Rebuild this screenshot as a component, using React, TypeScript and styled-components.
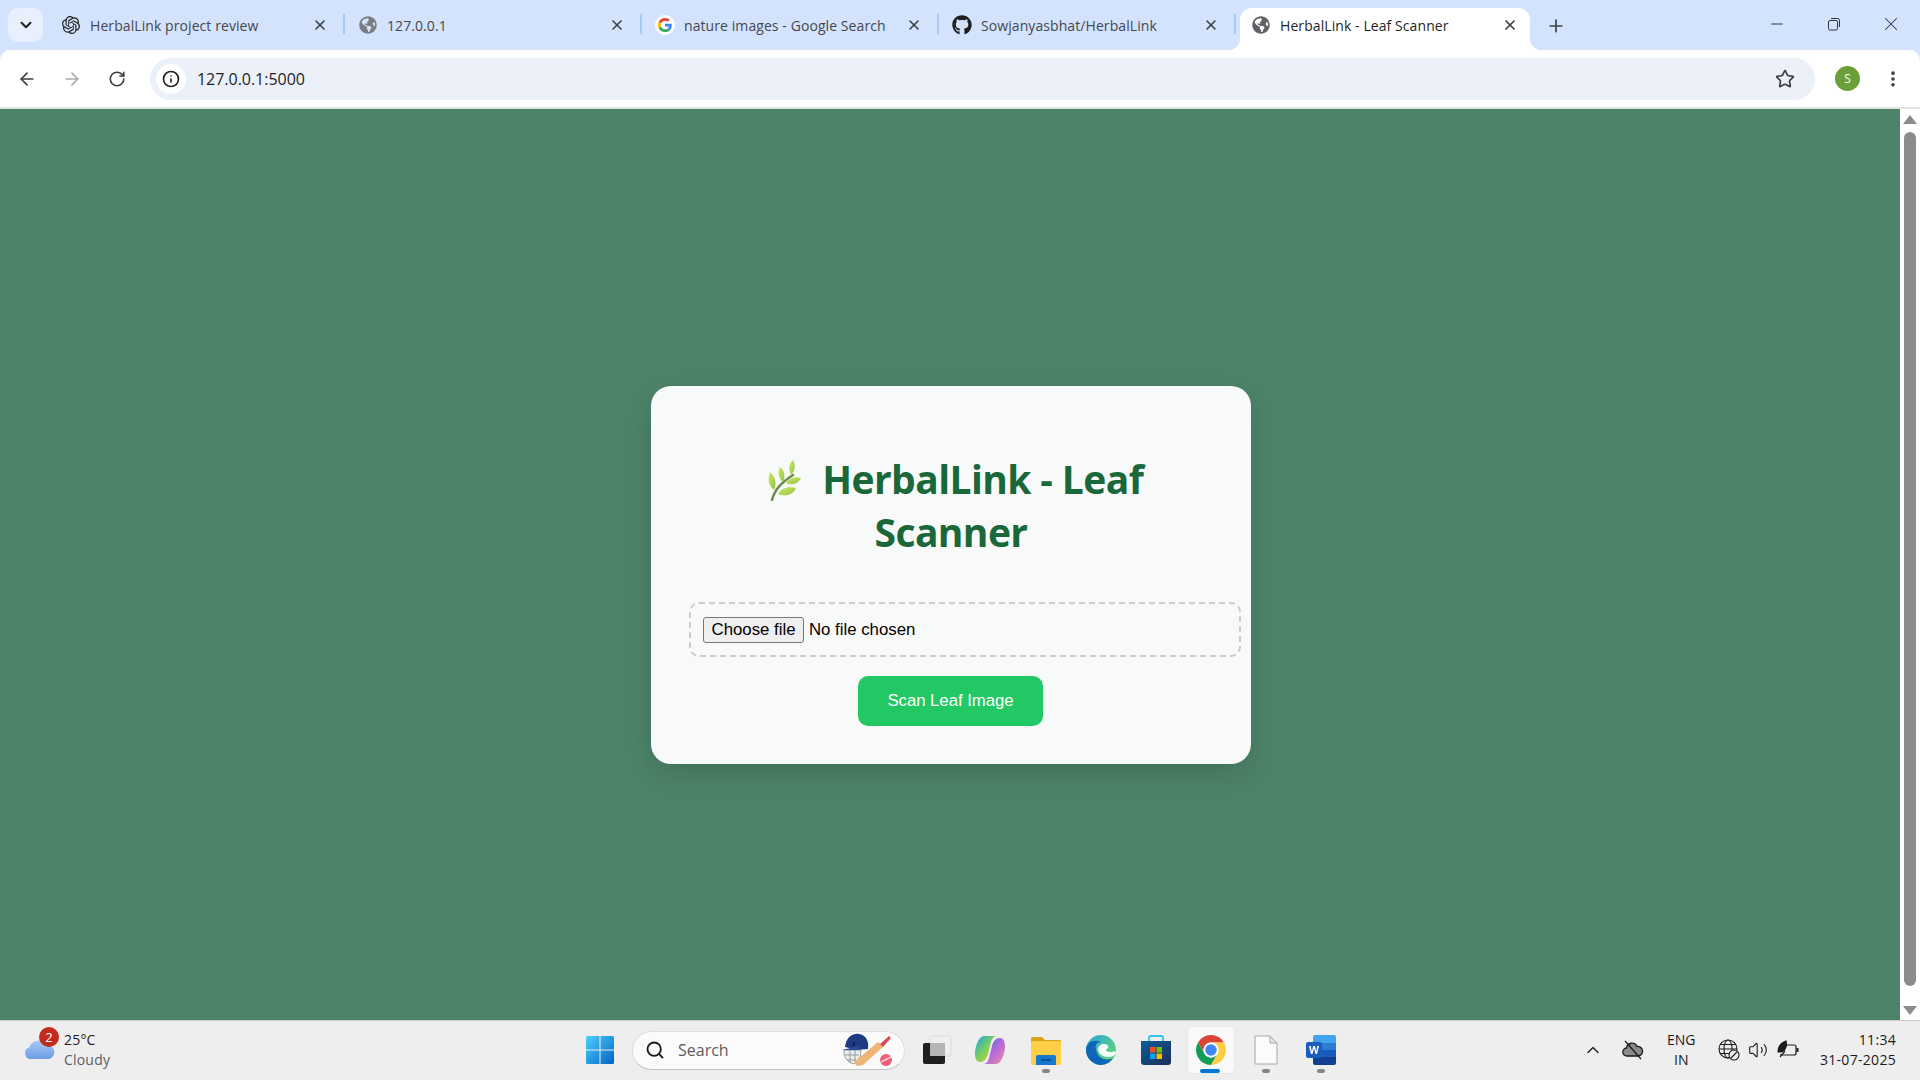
import React from "react";
import styled, { createGlobalStyle } from "styled-components";
import { FaGithub, FaGlobeAmericas } from "react-icons/fa";
import { SiOpenai } from "react-icons/si";
import {
  ArrowLeft,
  ArrowRight,
  ChevronDown,
  ChevronUp,
  EllipsisVertical,
  Info,
  Minus,
  Plus,
  RotateCw,
  Search,
  Star,
  Volume2,
  X,
} from "lucide-react";

const UI_FONT = `"Open Sans", "Noto Sans", sans-serif`;
const ARIAL = `"Liberation Sans", Arial, sans-serif`;

const GlobalStyle = createGlobalStyle`
  html, body {
    margin: 0;
    padding: 0;
    height: 100%;
    overflow: hidden;
  }
  #root {
    height: 100%;
  }
`;

const Screen = styled.div`
  display: flex;
  flex-direction: column;
  width: 1920px;
  height: 1080px;
  font-family: ${UI_FONT};
  background: #d3e3fd;
`;

/* ---- tab strip ---- */

const TabStrip = styled.div`
  display: flex;
  align-items: flex-end;
  height: 50px;
  padding-left: 8px;
  flex-shrink: 0;
`;

const TabSearch = styled.div`
  display: flex;
  align-items: center;
  justify-content: center;
  align-self: flex-start;
  width: 35px;
  height: 34px;
  margin: 8px 5px 0 0;
  border-radius: 10px;
  background: #e9f0fd;
  color: #1f1f1f;
`;

const Tab = styled.div<{ $active?: boolean }>`
  position: relative;
  display: flex;
  align-items: center;
  box-sizing: border-box;
  width: ${(p) => (p.$active ? "290px" : "295px")};
  height: 42px;
  padding: 0 ${(p) => (p.$active ? "12px" : "15px")} 8px
    ${(p) => (p.$active ? "11px" : "13px")};
  margin-left: ${(p) => (p.$active ? "4px" : "0")};
  border-radius: 12px 12px 0 0;
  background: ${(p) => (p.$active ? "#ffffff" : "transparent")};
  color: ${(p) => (p.$active ? "#1f1f1f" : "#45484d")};

  ${(p) =>
    p.$active &&
    `
    &::before, &::after {
      content: "";
      position: absolute;
      bottom: 0;
      width: 12px;
      height: 12px;
    }
    &::before {
      left: -12px;
      background: radial-gradient(circle at 0 0, transparent 12px, #fff 12.5px);
    }
    &::after {
      right: -12px;
      background: radial-gradient(circle at 100% 0, transparent 12px, #fff 12.5px);
    }
  `}
`;

const TabIcon = styled.span<{ $color?: string }>`
  display: flex;
  align-items: center;
  justify-content: center;
  width: 20px;
  height: 20px;
  flex-shrink: 0;
  color: ${(p) => p.$color ?? "#5f6368"};
`;

const TabTitle = styled.span`
  flex: 1;
  margin-left: 9px;
  font-size: 14px;
  letter-spacing: 0.08px;
  white-space: nowrap;
  overflow: hidden;
`;

const TabClose = styled.span`
  display: flex;
  align-items: center;
  justify-content: center;
  width: 16px;
  height: 16px;
  flex-shrink: 0;
  color: #3c4043;
`;

const TabDivider = styled.span`
  align-self: flex-start;
  width: 2px;
  height: 20px;
  margin-top: 14px;
  background: #a8c7fa;
  flex-shrink: 0;
`;

const NewTab = styled.span`
  display: flex;
  align-self: flex-start;
  margin: 16px 0 0 16px;
  color: #3c4043;
`;

const WindowControls = styled.div`
  display: flex;
  align-self: flex-start;
  align-items: center;
  height: 50px;
  margin-left: auto;
  padding-right: 1px;
  color: #2f3236;
`;

const WindowButton = styled.span`
  display: flex;
  align-items: center;
  justify-content: center;
  width: 57px;
  height: 50px;
  margin-top: -3px;
`;

/* ---- toolbar ---- */

const Toolbar = styled.div`
  display: flex;
  align-items: center;
  height: 57px;
  box-sizing: border-box;
  padding: 0 0 0 15px;
  background: #ffffff;
  border-radius: 10px 10px 0 0;
  flex-shrink: 0;
`;

const NavButton = styled.span<{ $disabled?: boolean }>`
  display: flex;
  align-items: center;
  justify-content: center;
  width: 24px;
  height: 24px;
  margin-right: 21px;
  color: ${(p) => (p.$disabled ? "#a9abad" : "#3c4043")};
`;

const AddressBar = styled.div`
  display: flex;
  align-items: center;
  width: 1665px;
  height: 42px;
  padding: 0 20px 0 6px;
  box-sizing: border-box;
  border-radius: 21px;
  background: #ebf0f9;
`;

const SiteInfo = styled.span`
  display: flex;
  align-items: center;
  justify-content: center;
  width: 30px;
  height: 30px;
  border-radius: 50%;
  background: #ffffff;
  color: #1f1f1f;
`;

const UrlText = styled.span`
  flex: 1;
  margin-left: 11px;
  font-size: 16px;
  letter-spacing: -0.03px;
  color: #1f1f1f;
`;

const Avatar = styled.span`
  display: flex;
  align-items: center;
  justify-content: center;
  width: 25px;
  height: 25px;
  margin-left: 20px;
  border-radius: 50%;
  background: #6a9f3a;
  color: #ffffff;
  font-size: 12px;
`;

const MenuButton = styled.span`
  display: flex;
  margin-left: 23px;
  color: #3c4043;
`;

const ToolbarEdge = styled.div`
  height: 2px;
  background: #e2e3e3;
  flex-shrink: 0;
`;

/* ---- page ---- */

const Viewport = styled.div`
  display: flex;
  flex: 1;
  min-height: 0;
`;

const Page = styled.main`
  flex: 1;
  display: flex;
  align-items: center;
  justify-content: center;
  padding-top: 21px;
  background: #4d8469;
`;

const Card = styled.section`
  width: 600px;
  height: 378px;
  box-sizing: border-box;
  margin-left: 2px;
  padding: 38px;
  border-radius: 20px;
  background: #f8faf9;
  box-shadow: 0 10px 30px rgba(0, 0, 0, 0.15);
  text-align: center;
`;

const Title = styled.h1`
  margin: 28px 0 44px;
  font-family: ${UI_FONT};
  font-size: 39px;
  font-weight: 700;
  line-height: 53px;
  letter-spacing: -0.6px;
  color: #1a673a;
`;

const LeafGlyph = styled.svg`
  width: 36px;
  height: 42px;
  margin: 0 19.5px 0 8px;
  vertical-align: -7px;
`;

const FileField = styled.div`
  display: flex;
  align-items: center;
  width: 100%;
  padding: 13px 12px 12px;
  border: 2px dashed #cccccc;
  border-radius: 10px;
  box-sizing: content-box;
  height: 26px;
  font-family: ${ARIAL};
  font-size: 16.8px;
  color: #000000;
`;

const ChooseFile = styled.button`
  box-sizing: border-box;
  width: 101px;
  height: 26px;
  padding: 0;
  margin-right: 5px;
  border: 1px solid #767676;
  border-radius: 3px;
  background: #efefef;
  font: inherit;
  color: #000000;
`;

const ScanButton = styled.button`
  display: block;
  width: 185px;
  height: 50px;
  margin: 19px 0 0 169px;
  border: 0;
  border-radius: 10px;
  background: #22c864;
  color: #ffffff;
  font-family: ${ARIAL};
  font-size: 16.7px;
`;

const Scrollbar = styled.div`
  display: flex;
  flex-direction: column;
  align-items: center;
  width: 20px;
  padding: 6px 0 5px;
  box-sizing: border-box;
  background: #ffffff;
`;

const ScrollArrow = styled.span<{ $down?: boolean }>`
  width: 0;
  height: 0;
  border-left: 7px solid transparent;
  border-right: 7px solid transparent;
  ${(p) =>
    p.$down ? "border-top: 9px solid #8b8b8b;" : "border-bottom: 9px solid #8b8b8b;"}
`;

const ScrollThumb = styled.span`
  flex: 1;
  width: 12px;
  margin: 8px 0 20px;
  border-radius: 6px;
  background: #8b8b8b;
`;

/* ---- taskbar ---- */

const Taskbar = styled.footer`
  display: flex;
  align-items: center;
  height: 60px;
  box-sizing: border-box;
  padding: 0 0 1px 24px;
  border-top: 1px solid #c9cbc9;
  background: #eeeeee;
  flex-shrink: 0;
  font-family: ${UI_FONT};
  color: #1b1b1b;
`;

const Weather = styled.div`
  display: flex;
  align-items: center;
  width: 561px;
  flex-shrink: 0;
`;

const WeatherIcon = styled.span`
  position: relative;
  display: flex;
  width: 32px;
  height: 34px;
  margin-bottom: 12px;
  align-items: flex-end;
`;

const WeatherBadge = styled.span`
  position: absolute;
  top: 0;
  right: -3px;
  display: flex;
  align-items: center;
  justify-content: center;
  width: 20px;
  height: 20px;
  border-radius: 50%;
  background: #c42b1c;
  color: #ffffff;
  font-size: 13px;
`;

const WeatherText = styled.span`
  display: flex;
  flex-direction: column;
  margin: -1px 0 0 8px;
  font-size: 14px;
  line-height: 20px;
  letter-spacing: 0.2px;
`;

const Muted = styled.span`
  color: #5d5d5d;
`;

const StartButton = styled.span`
  display: flex;
  width: 30px;
  height: 30px;
  flex-shrink: 0;
`;

const SearchPill = styled.div`
  display: flex;
  align-items: center;
  box-sizing: border-box;
  width: 273px;
  height: 39px;
  margin-left: 17px;
  padding: 0 10px 0 12px;
  border: 1px solid #dedede;
  border-bottom-color: #c4c4c4;
  border-radius: 20px;
  background: #fbfbfb;
  color: #1b1b1b;
  flex-shrink: 0;
`;

const SearchLabel = styled.span`
  flex: 1;
  margin-left: 13px;
  font-size: 16px;
  color: #5d5d5d;
`;

const TaskIcons = styled.div`
  display: flex;
  align-items: center;
  margin-left: 16px;
  flex-shrink: 0;
`;

const TaskSlot = styled.span<{ $active?: boolean; $dot?: boolean; $width?: number }>`
  position: relative;
  display: flex;
  align-items: center;
  justify-content: center;
  width: ${(p) => p.$width ?? 55}px;
  height: 48px;
  border-radius: 6px;

  ${(p) =>
    p.$active &&
    `
    &::before {
      content: "";
      position: absolute;
      top: 0;
      left: 4px;
      right: 3px;
      bottom: 0;
      border-radius: 6px;
      background: #f9f9f9;
      border: 1px solid #e8e8e8;
      box-sizing: border-box;
    }
    &::after {
      content: "";
      position: absolute;
      bottom: 1px;
      left: 17px;
      width: 20px;
      height: 4px;
      border-radius: 2px;
      background: #0078d4;
    }
  `}

  ${(p) =>
    p.$dot &&
    `
    &::after {
      content: "";
      position: absolute;
      bottom: 1px;
      left: 50%;
      margin-left: -4px;
      width: 8px;
      height: 4px;
      border-radius: 2px;
      background: #858585;
    }
  `}

  svg {
    position: relative;
  }
`;

const Tray = styled.div`
  display: flex;
  align-items: center;
  flex: 1;
  padding-right: 24px;
`;

const TrayIcon = styled.span<{ $left: number }>`
  display: flex;
  margin-left: ${(p) => p.$left}px;
`;

const Language = styled.span`
  display: flex;
  flex-direction: column;
  align-items: center;
  margin: 0 0 0 23px;
  font-size: 14px;
  line-height: 20px;
`;

const Clock = styled.span`
  display: flex;
  flex-direction: column;
  align-items: flex-end;
  margin: -1px 0 0 auto;
  font-size: 14px;
  line-height: 20px;
  letter-spacing: 0.3px;
`;

/* ---- drawn icons ---- */

const RestoreIcon = () => (
  <svg width="14" height="14" viewBox="0 0 14 14" fill="none" stroke="currentColor">
    <rect x="1.5" y="3.5" width="9" height="9.5" rx="1.5" />
    <path d="M4 1.5h6.5a2 2 0 0 1 2 2V10" />
  </svg>
);

const GoogleIcon = () => (
  <svg width="20" height="20" viewBox="0 0 48 48">
    <circle cx="24" cy="24" r="24" fill="#fff" />
    <g transform="translate(7 7) scale(0.71)">
      <path fill="#EA4335" d="M24 9.5c3.5 0 6.700 1.200 9.200 3.600l6.900-6.900C35.900 2.400 30.500 0 24 0 14.600 0 6.500 5.400 2.600 13.200l8 6.200C12.500 13.700 17.800 9.500 24 9.500z" />
      <path fill="#4285F4" d="M46.900 24.500c0-1.600-.1-3.100-.4-4.500H24v9h12.900c-.6 3-2.200 5.500-4.700 7.200l7.700 6c4.500-4.200 7-10.300 7-17.700z" />
      <path fill="#FBBC05" d="M10.500 28.600c-.5-1.500-.8-3-.8-4.600s.3-3.200.8-4.600l-8-6.200C.9 16.500 0 20.100 0 24s.9 7.500 2.600 10.800l7.900-6.200z" />
      <path fill="#34A853" d="M24 48c6.500 0 11.900-2.100 15.900-5.800l-7.700-6c-2.100 1.400-4.900 2.300-8.200 2.300-6.200 0-11.500-4.200-13.400-9.900l-8 6.200C6.500 42.600 14.600 48 24 48z" />
    </g>
  </svg>
);

const LeafEmoji = () => (
  <LeafGlyph viewBox="0 0 36 42">
    <defs>
      <linearGradient id="leafFill" x1="0" y1="0" x2="1" y2="1">
        <stop offset="0" stopColor="#cfe96a" />
        <stop offset="1" stopColor="#8fc23e" />
      </linearGradient>
    </defs>
    <path d="M5 41C8 30 14 24 26 16" fill="none" stroke="#6f8a4a" strokeWidth="2.400" strokeLinecap="round" />
    <path d="M7 31C2 27 0 20 3 13c5 4 7 11 4 18z" fill="url(#leafFill)" />
    <path d="M16 23c-4-3-6-9-3-15 4 3 6 9 3 15z" fill="url(#leafFill)" />
    <path d="M24 16c-3-5-2-11 2-15 3 5 2 11-2 15z" fill="url(#leafFill)" />
    <path d="M19 24c3-5 9-7 15-5-2 5-9 8-15 5z" fill="url(#leafFill)" />
    <path d="M11 35c3-6 10-8 18-6-3 7-11 9-18 6z" fill="url(#leafFill)" />
  </LeafGlyph>
);

const CloudIcon = () => (
  <svg width="32" height="24" viewBox="0 0 32 24">
    <defs>
      <linearGradient id="cloudFill" x1="0" y1="0" x2="0" y2="1">
        <stop offset="0" stopColor="#a9c8f5" />
        <stop offset="1" stopColor="#6d9be6" />
      </linearGradient>
    </defs>
    <path d="M7 22a6 6 0 0 1-1.500-11.800A9 9 0 0 1 22 8.500a6.800 6.800 0 0 1 3 13.500z" fill="url(#cloudFill)" />
  </svg>
);

const WindowsLogo = () => (
  <svg width="30" height="30" viewBox="0 0 30 30">
    <defs>
      <linearGradient id="winFill" x1="0" y1="0" x2="1" y2="1">
        <stop offset="0" stopColor="#4fd0fb" />
        <stop offset="1" stopColor="#0063c9" />
      </linearGradient>
    </defs>
    <path d="M1 2.500A1.500 1.500 0 0 1 2.500 1h12v13.500H1z M15.500 1h12A1.500 1.500 0 0 1 29 2.500v12H15.500z M1 15.500h13.500V29h-12A1.500 1.500 0 0 1 1 27.500z M15.500 15.500H29v12a1.500 1.500 0 0 1-1.500 1.500h-12z" fill="url(#winFill)" />
  </svg>
);

const CricketIcon = () => (
  <svg width="52" height="34" viewBox="0 0 52 34">
    <g fill="none" stroke="#8f9498" strokeWidth="0.900">
      <path d="M2 17c-1 7 4 13 10 14l6-5 1-9z" fill="#ececec" />
      <path d="M3 22h14M5 27h9M8 17v13M13 17v12" />
    </g>
    <path d="M3 14C4 5 10 0 17 1c7 1 10 7 9 15l-11 1z" fill="#1f3a80" />
    <path d="M0 17l17-4v4z" fill="#2a4a9c" />
    <path d="M11 9h2v4h-2z" fill="#0e1f4e" />
    <path d="M15 33l-3-4 24-20 6 4-21 19z" fill="#eeb577" />
    <path d="M38 11l9-8 2 2-8 9z" fill="#d9485f" />
    <circle cx="44" cy="27" r="6" fill="#ef5d78" />
    <path d="M39 29l10-5" stroke="#fbd3db" strokeWidth="1.500" />
  </svg>
);

const TaskView = () => (
  <svg width="30" height="30" viewBox="0 0 30 30">
    <rect x="8" y="1" width="21" height="20" rx="2" fill="#efefef" stroke="#dcdcdc" />
    <rect x="1" y="8" width="22" height="21" rx="2" fill="#1f1f1f" />
    <rect x="8" y="8" width="15" height="13" fill="#b5b5b5" />
  </svg>
);

const CopilotIcon = () => (
  <svg width="32" height="30" viewBox="0 0 32 30">
    <defs>
      <linearGradient id="copA" x1="0" y1="0" x2="1" y2="1">
        <stop offset="0" stopColor="#1aa3e8" />
        <stop offset="0.5" stopColor="#7fd05a" />
        <stop offset="1" stopColor="#f5c33b" />
      </linearGradient>
      <linearGradient id="copB" x1="0" y1="0" x2="1" y2="1">
        <stop offset="0" stopColor="#2f6fe6" />
        <stop offset="0.5" stopColor="#b469d9" />
        <stop offset="1" stopColor="#f08aa8" />
      </linearGradient>
    </defs>
    <path d="M9 1h13c-3 0-5 2-6 6l-3 12c-1 5-4 8-8 8-3 0-5-3-5-8 0-8 4-18 9-18z" fill="url(#copA)" />
    <path d="M21 29H8c3 0 5-2 6-6l3-12c1-5 4-8 8-8 3 0 5 3 5 8 0 8-4 18-9 18z" fill="url(#copB)" />
  </svg>
);

const FolderIcon = () => (
  <svg width="32" height="30" viewBox="0 0 32 30">
    <path d="M1 4a2 2 0 0 1 2-2h9l3 3h15a2 2 0 0 1 1 1v3H1z" fill="#dba213" />
    <rect x="1" y="6" width="30" height="24" rx="2" fill="#ffcf48" />
    <path d="M6 22a2 2 0 0 1 2-2h16a2 2 0 0 1 2 2v8H6z" fill="#1478cf" />
    <rect x="11" y="24" width="10" height="2" fill="#0d4f95" />
  </svg>
);

const EdgeIcon = () => (
  <svg width="30" height="30" viewBox="0 0 30 30">
    <defs>
      <linearGradient id="edgeTop" x1="0" y1="0" x2="1" y2="1">
        <stop offset="0" stopColor="#2aa4d8" />
        <stop offset="1" stopColor="#6ee06a" />
      </linearGradient>
    </defs>
    <circle cx="15" cy="15" r="15" fill="url(#edgeTop)" />
    <path d="M0 15C0 7 9 4 15 7c-5 0-6 4-5 8 1 6 7 11 14 9 1 0 2-.500 3-1-3 4-7 7-12 7C7 30 0 23 0 15z" fill="#0f66b8" />
    <path d="M30 17c0 3-4 5-8 5-6 0-10-4-10-8 0-3 3-5 6-5 3 0 5 2 4 4-.500 1-2 1-2 2 0 1 2 2 4 2 3 0 6-1 6 0z" fill="#fff" opacity="0.950" />
  </svg>
);

const StoreIcon = () => (
  <svg width="30" height="30" viewBox="0 0 30 30">
    <defs>
      <linearGradient id="storeFill" x1="0" y1="0" x2="1" y2="1">
        <stop offset="0" stopColor="#0d5c9c" />
        <stop offset="1" stopColor="#1c2f57" />
      </linearGradient>
    </defs>
    <path d="M8 6V2.500A1.500 1.500 0 0 1 9.500 1h11A1.500 1.500 0 0 1 22 2.500V6" fill="none" stroke="#31c4f0" strokeWidth="1.800" />
    <path d="M0 6h30v21a3 3 0 0 1-3 3H3a3 3 0 0 1-3-3z" fill="url(#storeFill)" />
    <rect x="9" y="12" width="5.500" height="5.500" fill="#f25022" />
    <rect x="15.500" y="12" width="5.500" height="5.500" fill="#7fba00" />
    <rect x="9" y="18.500" width="5.500" height="5.500" fill="#00a4ef" />
    <rect x="15.500" y="18.500" width="5.500" height="5.500" fill="#ffb900" />
  </svg>
);

const ChromeIcon = () => (
  <svg width="30" height="30" viewBox="0 0 24 24">
    <path d="M12 0A12 12 0 0 1 22.390 6H12A6 6 0 0 0 6.800 15L1.610 6A12 12 0 0 1 12 0z" fill="#db4437" />
    <path d="M1.610 6A12 12 0 0 0 12 24L17.200 15A6 6 0 0 1 6.800 15z" fill="#0f9d58" />
    <path d="M22.390 6A12 12 0 0 1 12 24L17.200 15A6 6 0 0 0 12 6z" fill="#ffcd40" />
    <circle cx="12" cy="12" r="6" fill="#fff" />
    <circle cx="12" cy="12" r="4.600" fill="#4285f4" />
  </svg>
);

const FileIcon = () => (
  <svg width="24" height="30" viewBox="0 0 24 30">
    <path d="M1 1h15l7 7v21H1z" fill="#fcfcfc" stroke="#a6a6a6" />
    <path d="M16 1v7h7z" fill="#e4e4e4" stroke="#a6a6a6" />
  </svg>
);

const WordIcon = () => (
  <svg width="30" height="30" viewBox="0 0 30 30">
    <path d="M7 2a2 2 0 0 1 2-2h19a2 2 0 0 1 2 2v6H7z" fill="#41a5ee" />
    <rect x="7" y="8" width="23" height="7" fill="#2b7cd3" />
    <rect x="7" y="15" width="23" height="7" fill="#185abd" />
    <path d="M7 22h23v6a2 2 0 0 1-2 2H9a2 2 0 0 1-2-2z" fill="#103f91" />
    <rect x="0" y="7" width="16" height="16" rx="2" fill="#1a5dbd" />
    <path d="M3 11l2 8h1.500L8 13.500 9.500 19H11l2-8h-1.600l-1.100 5.500L9 11H7.200l-1.400 5.500L4.700 11z" fill="#fff" />
  </svg>
);

const OfflineCloud = () => (
  <svg width="22" height="20" viewBox="0 0 22 20" fill="none" stroke="#1b1b1b" strokeWidth="1.300">
    <path d="M5 16a4 4 0 0 1-.500-8A5.500 5.500 0 0 1 15 6.500 4.700 4.700 0 0 1 16.500 16z" fill="#8a8a8a" />
    <path d="M3 1l16 18" />
  </svg>
);

const GlobeBlocked = () => (
  <svg width="22" height="22" viewBox="0 0 22 22" fill="none" stroke="#1b1b1b" strokeWidth="1.100">
    <circle cx="10" cy="10" r="9" />
    <ellipse cx="10" cy="10" rx="4" ry="9" />
    <path d="M1 10h18M2 5.500h16M2 14.500h16" />
    <circle cx="16" cy="16" r="5" fill="#eeeeee" />
    <path d="M13 19l6-6" />
  </svg>
);

const BatteryLeaf = () => (
  <svg width="22" height="20" viewBox="0 0 22 20" fill="none" stroke="#1b1b1b" strokeWidth="1.200">
    <path d="M6 5h11a2 2 0 0 1 2 2v6a2 2 0 0 1-2 2H3" />
    <rect x="19.500" y="8" width="2" height="4" fill="#1b1b1b" stroke="none" />
    <path d="M1 12C1 6 5 2 9 1c1 4 0 10-5 11z" fill="#1b1b1b" />
    <path d="M3 17l5-6" />
  </svg>
);

const TABS = [
  { title: "HerbalLink project review", icon: <SiOpenai size={18} />, color: "#1f1f1f" },
  { title: "127.0.0.1", icon: <FaGlobeAmericas size={18} />, color: "#7a7d80" },
  { title: "nature images - Google Search", icon: <GoogleIcon /> },
  { title: "Sowjanyasbhat/HerbalLink", icon: <FaGithub size={20} />, color: "#1f1f1f" },
];

const APPS = [
  { icon: <CopilotIcon /> },
  { icon: <FolderIcon />, dot: true },
  { icon: <EdgeIcon /> },
  { icon: <StoreIcon /> },
  { icon: <ChromeIcon />, active: true },
  { icon: <FileIcon />, dot: true },
  { icon: <WordIcon />, dot: true },
];

export default function App() {
  return (
    <Screen>
      <GlobalStyle />
      <TabStrip>
        <TabSearch>
          <ChevronDown size={18} strokeWidth={2.6} />
        </TabSearch>
        {TABS.map((tab) => (
          <React.Fragment key={tab.title}>
            <Tab>
              <TabIcon $color={tab.color}>{tab.icon}</TabIcon>
              <TabTitle>{tab.title}</TabTitle>
              <TabClose>
                <X size={16} strokeWidth={2.4} />
              </TabClose>
            </Tab>
            <TabDivider />
          </React.Fragment>
        ))}
        <Tab $active>
          <TabIcon>
            <FaGlobeAmericas size={18} />
          </TabIcon>
          <TabTitle>HerbalLink - Leaf Scanner</TabTitle>
          <TabClose>
            <X size={16} strokeWidth={2.6} />
          </TabClose>
        </Tab>
        <NewTab>
          <Plus size={20} strokeWidth={2} />
        </NewTab>
        <WindowControls>
          <WindowButton>
            <Minus size={18} strokeWidth={1.3} />
          </WindowButton>
          <WindowButton>
            <RestoreIcon />
          </WindowButton>
          <WindowButton>
            <X size={22} strokeWidth={1.1} />
          </WindowButton>
        </WindowControls>
      </TabStrip>

      <Toolbar>
        <NavButton>
          <ArrowLeft size={20} strokeWidth={2} />
        </NavButton>
        <NavButton $disabled>
          <ArrowRight size={20} strokeWidth={2} />
        </NavButton>
        <NavButton>
          <RotateCw size={18} strokeWidth={2.2} />
        </NavButton>
        <AddressBar>
          <SiteInfo>
            <Info size={18} strokeWidth={2.2} />
          </SiteInfo>
          <UrlText>127.0.0.1:5000</UrlText>
          <Star size={20} strokeWidth={2} color="#3c4043" />
        </AddressBar>
        <Avatar>S</Avatar>
        <MenuButton>
          <EllipsisVertical size={20} strokeWidth={2.4} />
        </MenuButton>
      </Toolbar>
      <ToolbarEdge />

      <Viewport>
        <Page>
          <Card>
            <Title>
              <LeafEmoji />
              HerbalLink - Leaf Scanner
            </Title>
            <FileField>
              <ChooseFile type="button">Choose file</ChooseFile>
              No file chosen
            </FileField>
            <ScanButton type="button">Scan Leaf Image</ScanButton>
          </Card>
        </Page>
        <Scrollbar>
          <ScrollArrow />
          <ScrollThumb />
          <ScrollArrow $down />
        </Scrollbar>
      </Viewport>

      <Taskbar>
        <Weather>
          <WeatherIcon>
            <CloudIcon />
            <WeatherBadge>2</WeatherBadge>
          </WeatherIcon>
          <WeatherText>
            <span>25°C</span>
            <Muted>Cloudy</Muted>
          </WeatherText>
        </Weather>
        <StartButton>
          <WindowsLogo />
        </StartButton>
        <SearchPill>
          <Search size={20} strokeWidth={2.2} />
          <SearchLabel>Search</SearchLabel>
          <CricketIcon />
        </SearchPill>
        <TaskIcons>
          <TaskSlot $width={32}>
            <TaskView />
          </TaskSlot>
          <TaskSlot $width={10} />
          {APPS.map((app, i) => (
            <TaskSlot key={i} $active={app.active} $dot={app.dot}>
              {app.icon}
            </TaskSlot>
          ))}
        </TaskIcons>
        <Tray>
          <TrayIcon $left={235}>
            <ChevronUp size={20} strokeWidth={1.6} />
          </TrayIcon>
          <TrayIcon $left={19}>
            <OfflineCloud />
          </TrayIcon>
          <Language>
            <span>ENG</span>
            <span>IN</span>
          </Language>
          <TrayIcon $left={22}>
            <GlobeBlocked />
          </TrayIcon>
          <TrayIcon $left={8}>
            <Volume2 size={20} strokeWidth={1.3} />
          </TrayIcon>
          <TrayIcon $left={9}>
            <BatteryLeaf />
          </TrayIcon>
          <Clock>
            <span>11:34</span>
            <span>31-07-2025</span>
          </Clock>
        </Tray>
      </Taskbar>
    </Screen>
  );
}
